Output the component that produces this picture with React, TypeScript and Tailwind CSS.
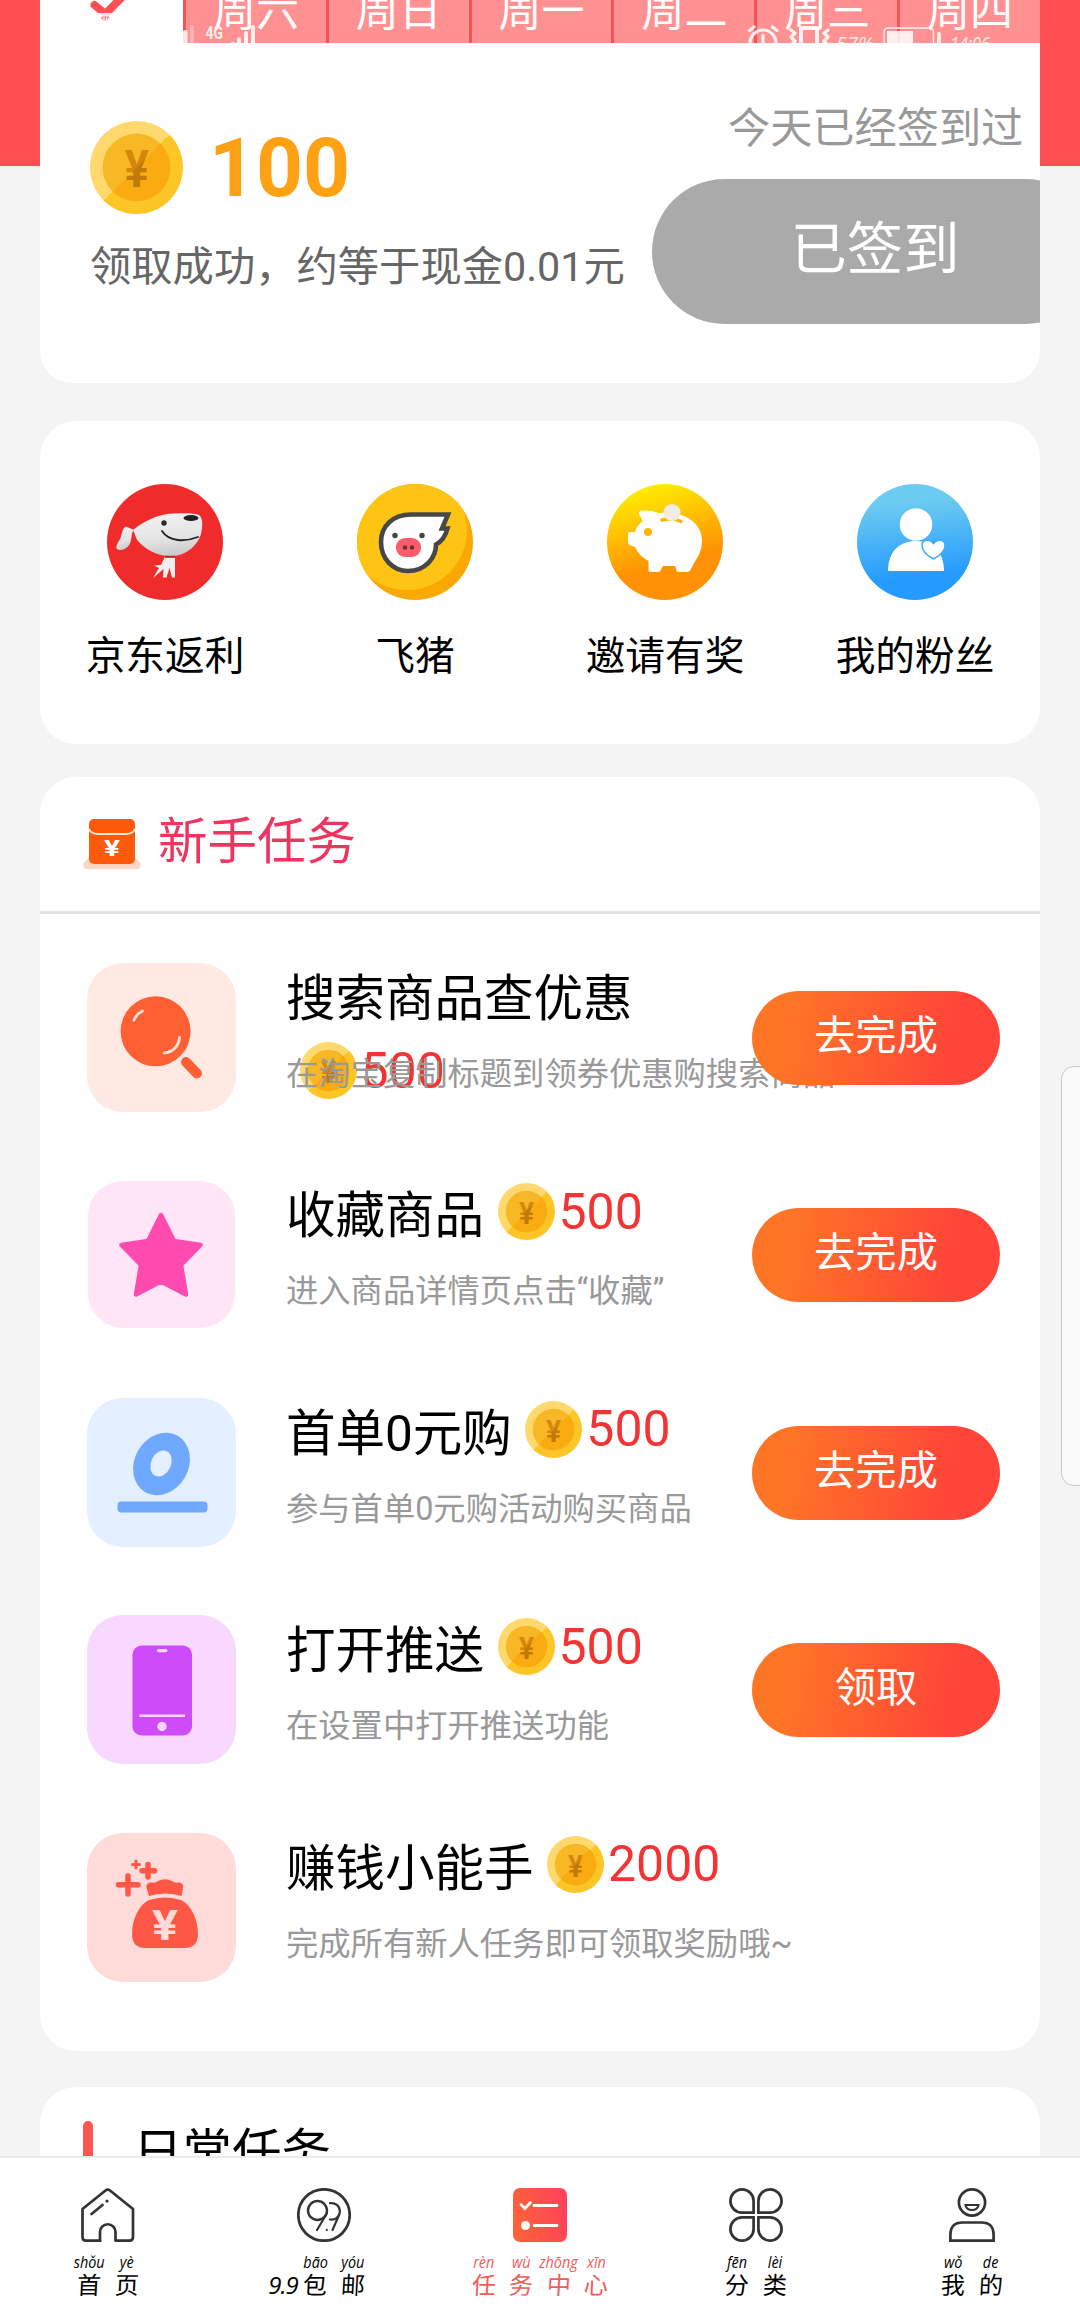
import React from "react";

const YEN_FONT = "Roboto, 'Noto Sans CJK SC', sans-serif";

function Coin({ className }: { className: string }) {
  const id = React.useId();
  return (
    <svg viewBox="0 0 94 94" className={className}>
      <defs>
        <linearGradient id={id + "a"} x1="0" y1="0" x2="1" y2="1">
          <stop offset="0.5" stopColor="#ffd96e" />
          <stop offset="0.5" stopColor="#fdc526" />
        </linearGradient>
        <linearGradient id={id + "b"} x1="0" y1="0" x2="1" y2="1">
          <stop offset="0.5" stopColor="#f8b724" />
          <stop offset="0.5" stopColor="#faab12" />
        </linearGradient>
        <linearGradient id={id + "c"} gradientUnits="userSpaceOnUse" x1="0" y1="0" x2="94" y2="94">
          <stop offset="0.5" stopColor="#d5870c" />
          <stop offset="0.5" stopColor="#c17a09" />
        </linearGradient>
      </defs>
      <circle cx="47" cy="47" r="47" fill={`url(#${id}a)`} />
      <circle cx="47" cy="47" r="34.3" fill={`url(#${id}b)`} />
      <text x="47.3" y="67" textAnchor="middle" textLength="25" lengthAdjust="spacingAndGlyphs" fontFamily={YEN_FONT} fontWeight="700" fontSize="53" fill={`url(#${id}c)`}>
        ¥
      </text>
    </svg>
  );
}

function StatusBar() {
  return (
    <svg viewBox="0 0 1080 43" className="absolute left-0 top-0 h-[43px] w-[1080px]">
      <g fill="#fff" fillOpacity="0.85">
        <rect x="90" y="13" width="50" height="3.5" />
        <rect x="183" y="30" width="4.5" height="16" rx="2" />
        <rect x="190" y="25" width="4" height="20" rx="2" fillOpacity="0.3" />
        <rect x="237" y="37" width="4" height="9" rx="2" />
        <rect x="244" y="31" width="4" height="14" rx="2" />
        <rect x="251" y="25" width="4" height="20" rx="2" />
        <rect x="231" y="42" width="4" height="3" rx="1" />
        <text x="205.500" y="39" fontFamily="Roboto, sans-serif" fontSize="18" fontWeight="700" textLength="17.500" lengthAdjust="spacingAndGlyphs">4G</text>
        <rect x="887" y="31" width="26" height="14" />
        <rect x="937" y="32" width="4" height="14" rx="2" />
        <g fontFamily="'Open Sans', sans-serif" fontSize="20" fontStyle="italic" fontWeight="400">
          <text x="836" y="51" textLength="38" lengthAdjust="spacingAndGlyphs">57%</text>
          <text x="950" y="51" textLength="40" lengthAdjust="spacingAndGlyphs">14:06</text>
        </g>
      </g>
      <g fill="none" stroke="#fff" strokeOpacity="0.88" strokeWidth="3.2" strokeLinecap="round" strokeLinejoin="round">
        <circle cx="763" cy="43" r="13" />
        <path d="M763 35V43L768 47M749.500 30.500L754 27M777 30.500L772.500 27" />
        <path d="M791 30L795 33L791 37L795 41L791 45M828 30L824 33L828 37L824 41L828 45" />
        <path d="M801 45V28H817V45" strokeWidth="4" />
        <rect x="884" y="28" width="49.500" height="30" rx="4" strokeWidth="1.300" />
      </g>
      <path d="M100.500 17L103 20.500H107L109.500 17Z" fill="#ff5355" fillOpacity="0.65" />
      <path d="M104 16.500V21M106.500 16.500V21" stroke="#fff" strokeWidth="1" />
    </svg>
  );
}

function JdIcon() {
  return (
    <svg viewBox="0 0 116 116" className="size-[116px]">
      <defs>
        <linearGradient id="dog" x1="0.300" y1="0" x2="0.500" y2="1">
          <stop offset="0" stopColor="#f2f2f2" />
          <stop offset="0.600" stopColor="#e4e4e4" />
          <stop offset="1" stopColor="#c9c9c9" />
        </linearGradient>
      </defs>
      <circle cx="58" cy="58" r="58" fill="#f02b2c" />
      <path d="M27 46L19 42.500C15 44 15 51 13 55C11 59 8.500 62 9.500 64.500C12 67 17 66.500 21 62.500C25 58 24 52 25.500 48Z" fill="url(#dog)" />
      <path d="M26 46C36 38 50 30 66 29.500C78 29 88 29 92 31C96.500 34 95.500 44 94 50C91 60 81 71 66 72C50 73 38 65 31 57C28 53 28 49 26 46Z" fill="url(#dog)" />
      <path d="M58 72.500H68L68 93.500H65L62.500 84L59.500 93.500H56L56.500 85L46 94L52 84L47 81.500L54 81Z" fill="#eee" />
      <path d="M58 72.800H68" stroke="#b3261f" strokeWidth="2" />
      <ellipse cx="84" cy="34" rx="7.500" ry="3" fill="#222" />
      <circle cx="57" cy="39" r="2.700" fill="#2a2a2a" />
      <path d="M55 47C62 58 78 58 91 53" fill="none" stroke="#222" strokeWidth="1.800" strokeLinecap="round" />
    </svg>
  );
}

function FliggyIcon() {
  return (
    <svg viewBox="0 0 116 116" className="size-[116px]">
      <defs>
        <clipPath id="pigclip">
          <circle cx="58" cy="58" r="58" />
        </clipPath>
      </defs>
      <circle cx="58" cy="58" r="58" fill="#fca803" />
      <circle cx="50" cy="46" r="60" fill="#fec414" clipPath="url(#pigclip)" />
      <path d="M91 30.500H54C36 30.500 24 42 24 58C24 75 36 87 51 87C68 87 79 74 79 60.500C86 57 89 50 90.500 44.500H85Z" fill="#fff" stroke="#474747" strokeWidth="4.600" />
      <circle cx="38" cy="51.500" r="2.700" fill="#444" />
      <circle cx="65" cy="51.500" r="2.700" fill="#444" />
      <rect x="39" y="54" width="25" height="19" rx="9" fill="#fd5c6b" />
      <circle cx="48" cy="63.500" r="2.200" fill="#663038" />
      <circle cx="55" cy="63.500" r="2.200" fill="#663038" />
    </svg>
  );
}

function PiggyBankIcon() {
  return (
    <svg viewBox="0 0 116 116" className="size-[116px]">
      <defs>
        <linearGradient id="bank" x1="0.250" y1="0" x2="0.550" y2="1">
          <stop offset="0" stopColor="#fff300" />
          <stop offset="0.700" stopColor="#ff9204" />
          <stop offset="1" stopColor="#ff9204" />
        </linearGradient>
      </defs>
      <circle cx="58" cy="58" r="58" fill="url(#bank)" />
      <path d="M21 50Q21 48 23 48H28Q30 41 36 37Q34 34 32 30Q31.500 27 35 26.500Q46 26 51 29Q62 28 72 30.500C86 34 95 44 95 57C95 70 88 76 83.500 86Q82.500 88 80 88H72Q69.500 88 69 85.500L68.500 82H56L53.500 86.500Q53 88 51 88H44Q41.500 88 41.500 85.500V77Q32 72 28 63L22.500 61Q21 60 21 58Z" fill="#fff" />
      <circle cx="41" cy="48" r="4" fill="#ffb800" />
      <path d="M55 36Q66 33.500 74 37.500" fill="none" stroke="#ffb400" strokeWidth="3.500" strokeLinecap="round" />
      <circle cx="65" cy="28.500" r="8.600" fill="#f1ebe1" />
    </svg>
  );
}

function FansIcon() {
  return (
    <svg viewBox="0 0 116 116" className="size-[116px]">
      <defs>
        <linearGradient id="fans" x1="0.450" y1="0" x2="0.550" y2="1">
          <stop offset="0.150" stopColor="#6ccbf1" />
          <stop offset="0.800" stopColor="#269bff" />
        </linearGradient>
      </defs>
      <circle cx="58" cy="58" r="58" fill="url(#fans)" />
      <circle cx="59" cy="40.500" r="16.300" fill="#fff" />
      <path d="M31 87C31 66 44 57 59 57C76 57 87 68 87 87Z" fill="#fff" />
      <path d="M76.500 75C69 71 65 67 65 61.500C65 55.500 73 54.500 76.500 59.500C80 54.500 88 55.500 88 61.500C88 67 84 71 76.500 75Z" fill="#fff" stroke="#3fabfa" strokeWidth="1.500" />
    </svg>
  );
}

function PacketIcon() {
  return (
    <svg viewBox="0 0 58 50" className="h-[50px] w-[58px]">
      <path d="M6 38L0 45Q0 50 4 50H54Q58 50 58 45L52 38Z" fill="#ffd6c4" />
      <rect x="6" y="0" width="46" height="45" rx="5" fill="#ff590b" />
      <path d="M6 10Q8 15 15 15H43Q50 15 52 10" fill="none" stroke="#ffe3d5" strokeWidth="2" />
      <text x="29" y="36.500" textAnchor="middle" fontFamily={YEN_FONT} fontWeight="700" fontSize="22" textLength="16" lengthAdjust="spacingAndGlyphs" fill="#fff">¥</text>
    </svg>
  );
}

const tiles: Record<string, React.ReactNode> = {
  search: (
    <>
      <rect width="149" height="149" rx="36" fill="#ffeae3" />
      <circle cx="68.600" cy="68.300" r="35" fill="#ff6033" />
      <path d="M99 99L110 110.500" stroke="#ff6033" strokeWidth="10" strokeLinecap="round" />
      <path d="M47 57Q50 50.500 55.500 48M92.500 74.500Q91 88 77.500 90" fill="none" stroke="#ffe3d8" strokeWidth="2.800" strokeLinecap="round" />
    </>
  ),
  star: (
    <>
      <rect x="1" y="1" width="147" height="147" rx="35" fill="#ffe5f6" />
      <path d="M74 35L87 61L113.500 65L94 85L99 114.500L74 101.500L49 114.500L54 85L34.500 65L61 61Z" fill="#ff4bb0" stroke="#ff4bb0" strokeWidth="4.500" strokeLinejoin="round" />
    </>
  ),
  zero: (
    <>
      <rect width="149" height="149" rx="36" fill="#e4f0ff" />
      <ellipse cx="74.500" cy="66" rx="27" ry="32.500" transform="rotate(30 74.500 66)" fill="#6fa8ff" />
      <ellipse cx="74" cy="65.500" rx="10" ry="13.500" transform="rotate(25 74 65.500)" fill="#e4f0ff" />
      <rect x="30.500" y="103.500" width="90" height="11" rx="4" fill="#6fa8ff" />
    </>
  ),
  phone: (
    <>
      <rect width="149" height="149" rx="36" fill="#f9d8ff" />
      <rect x="45.500" y="30.500" width="59.500" height="90" rx="9" fill="#cd4bf8" />
      <rect x="70" y="34" width="10.500" height="3.200" rx="1.600" fill="#f9d8ff" />
      <path d="M52.500 100.800H98" stroke="#f9d8ff" strokeWidth="2.400" />
      <circle cx="75" cy="111.500" r="4.700" fill="#f9d8ff" />
    </>
  ),
  bag: (
    <>
      <rect width="149" height="149" rx="36" fill="#ffdcd9" />
      <path d="M58.500 115Q45 115 45 101C45 86 52 72 62 67Q78 62 94 67C104 72 111 86 111 101Q111 115 97 115Z" fill="#ff5746" />
      <path d="M62 63L59.500 55Q58.500 49 65.500 49.500Q69 50 70 48.500Q78 44 86 48.500Q88 50 91 49.500Q97 49.500 96 55L94.500 63Q78 58 62 63Z" fill="#ff5746" />
      <path d="M41 43V61M31.500 51.700H51M61 31.500V44M55 37.700H67.500" stroke="#ff5746" strokeWidth="5.500" strokeLinecap="round" />
      <path d="M49 28V35M45.500 31.500H52.500" stroke="#ff5746" strokeWidth="3" strokeLinecap="round" />
      <text x="78" y="107" textAnchor="middle" fontFamily={YEN_FONT} fontWeight="700" fontSize="43" textLength="26" lengthAdjust="spacingAndGlyphs" fill="#ffdcd9">¥</text>
    </>
  ),
};

const tasks = [
  { icon: "search", title: "搜索商品查优惠", reward: "500", desc: "在淘宝复制标题到领券优惠购搜索商品", action: "去完成" },
  { icon: "star", title: "收藏商品", reward: "500", desc: "进入商品详情页点击“收藏”", action: "去完成" },
  { icon: "zero", title: "首单0元购", reward: "500", desc: "参与首单0元购活动购买商品", action: "去完成" },
  { icon: "phone", title: "打开推送", reward: "500", desc: "在设置中打开推送功能", action: "领取" },
  { icon: "bag", title: "赚钱小能手", reward: "2000", desc: "完成所有新人任务即可领取奖励哦~", action: "" },
];

const shortcuts = [
  { label: "京东返利", icon: <JdIcon /> },
  { label: "飞猪", icon: <FliggyIcon /> },
  { label: "邀请有奖", icon: <PiggyBankIcon /> },
  { label: "我的粉丝", icon: <FansIcon /> },
];

const line = { fill: "none", stroke: "#333", strokeWidth: 2.7, strokeLinecap: "round", strokeLinejoin: "round" } as const;

const navItems = [
  {
    prefix: "",
    chars: [["shǒu", "首"], ["yè", "页"]],
    icon: (
      <g {...line}>
        <path strokeLinecap="butt" d="M20.500 52.600H5Q1.500 52.600 1.500 49V21L24.500 2.500Q26.700 .9 29 2.500L52 21V49Q52 52.600 48.500 52.600H34.500V44A7.500 7.500 0 0 0 19 44V52.600" />
        <path d="M10.500 26L21.500 17" />
        <path d="M26 13V13.100" strokeWidth="3.200" />
      </g>
    ),
  },
  {
    prefix: "9.9",
    chars: [["bāo", "包"], ["yóu", "邮"]],
    icon: (
      <g {...line}>
        <circle cx="27" cy="27" r="25.700" />
        <circle cx="20.500" cy="22.500" r="9.500" strokeWidth="2.400" />
        <path d="M29.500 26L20 42M33 15.200A8.300 8.300 0 1 1 33 31.500M42.500 26L35.500 42M29.800 41.800V42" strokeWidth="2.200" />
      </g>
    ),
  },
  {
    prefix: "",
    active: true,
    chars: [["rèn", "任"], ["wù", "务"], ["zhōng", "中"], ["xīn", "心"]],
    icon: (
      <>
        <defs>
          <linearGradient id="navtask" x1="0" y1="0.600" x2="1" y2="0.400">
            <stop offset="0" stopColor="#ff6238" />
            <stop offset="1" stopColor="#ff425b" />
          </linearGradient>
        </defs>
        <rect width="54" height="54" rx="7" fill="url(#navtask)" />
        <path d="M8 16.500L12 20.500L17.500 14.500M21 17.500H44M21 37.500H44" fill="none" stroke="#fff" strokeWidth="2.800" strokeLinecap="round" />
        <circle cx="12.500" cy="37.500" r="4.500" fill="#fff" />
      </>
    ),
  },
  {
    prefix: "",
    chars: [["fēn", "分"], ["lèi", "类"]],
    icon: (
      <g {...line}>
        {["", "translate(54 0) scale(-1 1)", "translate(0 54) scale(1 -1)", "translate(54 54) scale(-1 -1)"].map((t) => (
          <path key={t} transform={t} strokeLinejoin="miter" d="M24.600 24.600V13A11.600 11.600 0 1 0 13 24.600Z" />
        ))}
      </g>
    ),
  },
  {
    prefix: "",
    chars: [["wǒ", "我"], ["de", "的"]],
    icon: (
      <g {...line} strokeLinejoin="miter" transform="translate(4 0)">
        <circle cx="23" cy="14.500" r="13.100" />
        <path d="M16.500 17H29.500A6.500 5 0 0 1 16.500 17Z" strokeWidth="2.200" />
        <path d="M1.400 52.600V47Q1.400 34.500 13.500 34.500H32.500Q44.600 34.500 44.600 47V52.600Z" />
      </g>
    ),
  },
];

export default function App() {
  return (
    <div className="relative flex h-[2312px] w-[1080px] flex-col overflow-hidden bg-[#f4f4f4] font-[Roboto,'Noto_Sans_CJK_SC',sans-serif] leading-none text-black">
      <div className="absolute left-0 top-0 h-[166px] w-full bg-[#ff4f51]" />

      <main className="relative flex h-[2156px] shrink-0 flex-col overflow-hidden px-10">
        <section className="h-[383px] shrink-0 overflow-hidden rounded-b-[32px] bg-white">
          <div className="flex h-[43px] overflow-hidden">
            <div className="w-[143px] bg-white pl-[50px]">
              <svg viewBox="0 0 44 20" className="h-5 w-11">
                <path d="M4.500 5L15.500 14L34 -5" fill="none" stroke="#ff4f51" strokeWidth="8" strokeLinecap="round" strokeLinejoin="round" />
              </svg>
            </div>
            {["周六", "周日", "周一", "周二", "周三", "周四"].map((d) => (
              <div key={d} className="flex h-[43px] flex-1 justify-center border-l-3 border-[#f95254] bg-[#ff9192] text-[43px] text-white">
                <span className="-mt-[10px]">{d}</span>
              </div>
            ))}
          </div>
          <div className="flex">
            <div className="w-[612px] shrink-0 pl-[50px] pt-[78px]">
              <div className="flex h-[93px] items-center">
                <Coin className="size-[93px]" />
                <span className="ml-[26px] text-[82px] font-bold text-[#ffa114]">100</span>
              </div>
              <p className="mt-[33px] whitespace-nowrap text-[41.300px] text-[#666]">领取成功，约等于现金0.01元</p>
            </div>
            <div className="w-[448px] shrink-0 pt-[65px]">
              <p className="pl-[76px] text-[42.200px] text-[#999]">今天已经签到过</p>
              <button className="mt-[29px] flex h-[145px] w-[446px] items-center justify-center rounded-full bg-[#aaa] pb-1 text-[56.300px] text-white">已签到</button>
            </div>
          </div>
        </section>

        <section className="mt-[38px] grid h-[323px] shrink-0 grid-cols-4 rounded-[36px] bg-white pt-[63px]">
          {shortcuts.map((s) => (
            <div key={s.label} className="flex flex-col items-center">
              {s.icon}
              <span className="mt-[37px] text-[39.700px]">{s.label}</span>
            </div>
          ))}
        </section>

        <section className="mt-[33px] h-[1274px] shrink-0 rounded-[36px] bg-white">
          <header className="flex h-[137px] items-start border-b-3 border-[#e4e4e4] pl-[43px] pt-[42px]">
            <PacketIcon />
            <h2 className="-mt-px ml-[17px] text-[49.500px] text-[#f0345f]">新手任务</h2>
          </header>
          <div className="pt-[49px]">
            {tasks.map((t) => (
              <div key={t.title} className="flex h-[217.400px] items-start pl-[47px]">
                <svg viewBox="0 0 149 149" className="size-[149px] shrink-0">
                  {tiles[t.icon]}
                </svg>
                <div className="ml-[50px] w-[466px] shrink-0">
                  <div className="flex h-[95px] flex-wrap content-start items-start pt-[3px]">
                    <h3 className="h-[76px] whitespace-nowrap pt-[9px] text-[49.500px]">{t.title}</h3>
                    <div className="ml-[13.500px] flex h-[57px] items-center">
                      <Coin className="size-[57px]" />
                      <span className="ml-[4px] text-[50px] text-[#f43334]">{t.reward}</span>
                    </div>
                  </div>
                  <p className="whitespace-nowrap text-[32.300px] text-[#999]">{t.desc}</p>
                </div>
                {t.action && (
                  <button className="relative mt-[28px] flex h-[94px] w-[248px] shrink-0 items-center justify-center rounded-full bg-linear-[100deg] from-[#ff7526] from-15% to-[#ff4439] to-80% pb-[3px] text-[41.300px] text-white">
                    {t.action}
                  </button>
                )}
              </div>
            ))}
          </div>
        </section>

        <section className="mt-[36px] flex h-[200px] shrink-0 items-start rounded-t-[36px] bg-white pl-[43px] pt-[34px]">
          <span className="h-[60px] w-[10px] rounded-full bg-[#ff5651]" />
          <h2 className="ml-[40px] mt-[8px] text-[49.500px]">日常任务</h2>
        </section>
      </main>

      <nav className="relative grid h-[156px] shrink-0 grid-cols-5 border-t-2 border-[#ebebeb] bg-white">
        {navItems.map((n) => (
          <div key={n.chars[0][1]} className={"flex flex-col items-center pt-[30px] " + (n.active ? "text-[#f45b5b]" : "text-black")}>
            <svg viewBox="0 0 54 54" className="size-[54px]">
              {n.icon}
            </svg>
            <div className={"mt-[11px] flex items-end font-['Open_Sans','Noto_Sans_CJK_SC',sans-serif] " + (n.prefix ? "-ml-[8px]" : "")}>
              {n.prefix && <span className="mr-[-1px] text-[24px] italic leading-[27px] tracking-[-1px]">{n.prefix}</span>}
              {n.chars.map(([py, han]) => (
                <span key={han} className="flex w-[37.500px] flex-col items-center">
                  <span className="scale-x-90 text-[16px] italic leading-[19px]">{py}</span>
                  <span className="-skew-x-3 text-[24px] leading-[26px]">{han}</span>
                </span>
              ))}
            </div>
          </div>
        ))}
      </nav>

      <aside className="absolute -right-[14px] top-[1066px] h-[420px] w-[33px] rounded-[13px] border border-[#c9c9c9] bg-[#f9f9f9]" />
      <StatusBar />
    </div>
  );
}
